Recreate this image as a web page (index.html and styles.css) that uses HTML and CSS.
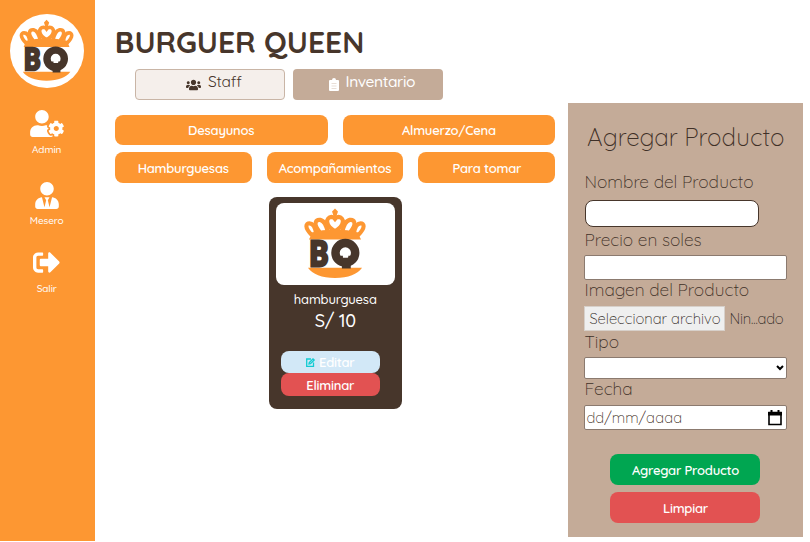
FILE: index.html
```html
<!DOCTYPE html>
<html lang="es">
<head>
<meta charset="utf-8">
<title>Burguer Queen</title>
<link rel="stylesheet" href="styles.css">
</head>
<body>
<svg class="defs" width="0" height="0" aria-hidden="true">
  <symbol id="logo" viewBox="0 0 64 74">
    <g fill="none" stroke="#fd9732" stroke-width="4.200">
      <path d="M8 28C0 20 2 16 5.500 16C9 16 11 19 12 25"/>
      <path d="M16 25C8 15 13 12 16.500 12.500C21 13.500 22.500 18 24 24"/>
      <path d="M55 28C63 20 61 16 57.500 16C54 16 52 19 51 25"/>
      <path d="M47 25C55 15 50 12 46.500 12.500C42 13.500 40.500 18 39 24"/>
      <path d="M31.500 24C21 18 22 10 28 9.500Q30 9.500 31.500 11.500Q33 9.500 35 9.500C41 10 42 18 31.500 24Z"/>
    </g>
    <path d="M31.500 1L34.500 4 32.500 10H30.500L28.500 4Z" fill="#fd9732"/>
    <path d="M6.500 25.500Q31.500 19 56.500 25.500Q56 30 58 32.500H5Q7 30 6.500 25.500Z" fill="#fd9732"/>
    <path d="M4 61H59Q52 71 31.500 71.500Q11 71 4 61Z" fill="#fd9732"/>
    <text x="5.500" y="59" class="logo-letter" textLength="19" lengthAdjust="spacingAndGlyphs">B</text>
    <circle cx="42" cy="46" r="10" fill="none" stroke="#47362b" stroke-width="8.600"/>
    <path d="M37 49H39.500V51H45V49H47.500V62H38.500V56H37Z" fill="#47362b"/>
  </symbol>
</svg>
<div class="app">
  <nav class="sidebar">
    <div class="brand"><svg width="58" height="64"><use href="#logo"/></svg></div>
    <a class="nav admin">
      <svg width="34" height="27" viewBox="0 0 640 512"><path fill="currentColor" d="M610.500 373.300c2.600-14.100 2.600-28.500 0-42.600l25.800-14.900c3-1.700 4.300-5.200 3.300-8.500-6.700-21.600-18.200-41.200-33.200-57.400-2.300-2.500-6-3.100-9-1.400l-25.800 14.900c-10.900-9.300-23.400-16.500-36.900-21.300v-29.800c0-3.400-2.400-6.400-5.700-7.100-22.300-5-45-4.800-66.200 0-3.300.7-5.700 3.700-5.700 7.100v29.800c-13.500 4.800-26 12-36.900 21.300l-25.800-14.900c-2.900-1.700-6.700-1.100-9 1.400-15 16.200-26.500 35.800-33.200 57.400-1 3.300.4 6.800 3.300 8.500l25.800 14.900c-2.600 14.100-2.600 28.500 0 42.600l-25.800 14.900c-3 1.700-4.300 5.200-3.300 8.500 6.700 21.600 18.200 41.100 33.200 57.400 2.300 2.500 6 3.100 9 1.400l25.800-14.900c10.900 9.300 23.400 16.500 36.900 21.300v29.800c0 3.400 2.400 6.400 5.700 7.100 22.300 5 45 4.800 66.200 0 3.300-.7 5.700-3.700 5.700-7.100v-29.800c13.500-4.800 26-12 36.900-21.300l25.800 14.900c2.900 1.700 6.700 1.100 9-1.400 15-16.200 26.500-35.800 33.200-57.400 1-3.300-.4-6.800-3.300-8.500l-25.800-14.900zM496 400.500c-26.800 0-48.500-21.800-48.500-48.500s21.800-48.500 48.500-48.500 48.500 21.800 48.500 48.500-21.700 48.500-48.500 48.500zM224 256c70.700 0 128-57.300 128-128S294.700 0 224 0 96 57.300 96 128s57.300 128 128 128zm201.200 226.500c-2.300-1.200-4.600-2.600-6.800-3.900l-7.900 4.600c-6 3.400-12.800 5.300-19.600 5.300-10.900 0-21.400-4.600-28.900-12.600-18.300-19.800-32.300-43.900-40.200-69.600-5.500-17.700 1.900-36.400 17.900-45.700l7.900-4.600c-.1-2.600-.1-5.200 0-7.800l-7.900-4.600c-16-9.200-23.400-28-17.900-45.700.9-2.900 2.200-5.800 3.200-8.700-3.800-.3-7.500-1.200-11.400-1.200h-16.700c-22.200 10.200-46.900 16-72.900 16s-50.600-5.800-72.900-16h-16.700C60.200 288 0 348.200 0 422.400V464c0 26.500 21.500 48 48 48h352c10.100 0 19.500-3.200 27.200-8.500-1.200-3.800-2-7.700-2-11.800v-9.200z"/></svg>
      <span>Admin</span></a>
    <a class="nav mesero">
      <svg width="24" height="27" viewBox="0 0 448 512"><path fill="currentColor" d="M224 256c70.700 0 128-57.300 128-128S294.700 0 224 0 96 57.300 96 128s57.300 128 128 128zm95.800 32.600L272 480l-32-136 32-56h-96l32 56-32 136-47.800-191.400C56.900 292 0 350.300 0 422.400V464c0 26.500 21.500 48 48 48h352c26.500 0 48-21.500 48-48v-41.600c0-72.100-56.900-130.400-128.200-133.800z"/></svg>
      <span>Mesero</span></a>
    <a class="nav salir">
      <svg width="27" height="27" viewBox="0 0 512 512"><path fill="currentColor" d="M497 273L329 441c-15 15-41 4.500-41-17v-96H152c-13.300 0-24-10.700-24-24v-96c0-13.300 10.700-24 24-24h136V88c0-21.400 25.900-32 41-17l168 168c9.300 9.400 9.300 24.600 0 34zM192 436v-40c0-6.600-5.400-12-12-12H96c-17.700 0-32-14.300-32-32V160c0-17.700 14.300-32 32-32h84c6.600 0 12-5.400 12-12V76c0-6.600-5.400-12-12-12H96c-53 0-96 43-96 96v192c0 53 43 96 96 96h84c6.600 0 12-5.400 12-12z"/></svg>
      <span>Salir</span></a>
  </nav>
  <main>
    <h1>BURGUER QUEEN</h1>
    <div class="tabs">
      <a class="tab staff"><svg width="15" height="12" viewBox="0 0 640 512"><path fill="currentColor" d="M96 224c35.300 0 64-28.700 64-64s-28.700-64-64-64-64 28.700-64 64 28.700 64 64 64zm448 0c35.300 0 64-28.700 64-64s-28.700-64-64-64-64 28.700-64 64 28.700 64 64 64zm32 32h-64c-17.600 0-33.500 7.100-45.100 18.600 40.300 22.100 68.900 62 75.100 109.400h66c17.700 0 32-14.300 32-32v-32c0-35.300-28.700-64-64-64zm-256 0c61.900 0 112-50.100 112-112S381.900 32 320 32 208 82.100 208 144s50.100 112 112 112zm76.800 32h-8.300c-20.800 10-43.900 16-68.500 16s-47.600-6-68.500-16h-8.300C179.600 288 128 339.600 128 403.200V432c0 26.500 21.500 48 48 48h288c26.500 0 48-21.500 48-48v-28.800c0-63.600-51.600-115.200-115.200-115.200zm-223.700-13.400C161.500 263.100 145.600 256 128 256H64c-35.300 0-64 28.700-64 64v32c0 17.700 14.300 32 32 32h65.900c6.300-47.400 34.900-87.300 75.200-109.400z"/></svg><span>Staff</span></a>
      <a class="tab inv"><svg width="10" height="13" viewBox="0 0 10 13"><path fill="#fff" d="M1 2H3A2 2 0 0 1 7 2H9Q10 2 10 3V12Q10 13 9 13H1Q0 13 0 12V3Q0 2 1 2Z"/><path stroke="#c4ab98" stroke-width=".4" d="M2.500 5.500H7.500M2.500 8H7.500M2.500 10.500H7.500"/></svg><span>Inventario</span></a>
    </div>
    <div class="cats two"><button>Desayunos</button><button>Almuerzo/Cena</button></div>
    <div class="cats three"><button>Hamburguesas</button><button>Acompañamientos</button><button>Para tomar</button></div>
    <article class="card">
      <div class="photo"><svg width="63" height="74"><use href="#logo"/></svg></div>
      <p class="name">hamburguesa</p>
      <p class="price">S/ 10</p>
      <button class="edit"><svg width="9" height="9" viewBox="0 0 9 9"><path d="M5 1H.7V8.300H7.500V4.500M3 6L3.300 4.500 7 .8 8.200 2 4.500 5.700Z" fill="none" stroke="#12cbd2" stroke-width="1.300"/></svg>Editar</button>
      <button class="remove">Eliminar</button>
    </article>
  </main>
  <form class="panel">
    <h2>Agregar Producto</h2>
    <label>Nombre del Producto</label>
    <div class="field rounded"></div>
    <label>Precio en soles</label>
    <div class="field price-field"></div>
    <label>Imagen del Producto</label>
    <div class="file"><span class="choose">Seleccionar archivo</span><span class="status">Nin...ado</span></div>
    <label>Tipo</label>
    <div class="field select"><svg width="8" height="6" viewBox="0 0 8 6"><path d="M1 1L4 4 7 1" fill="none" stroke="#000" stroke-width="2"/></svg></div>
    <label>Fecha</label>
    <div class="field date"><span>dd/mm/aaaa</span><svg width="14" height="16" viewBox="0 0 14 16"><path d="M1 2.500H13V14.500H1Z" fill="none" stroke="#000" stroke-width="1.600"/><path d="M0 2H14V5.500H0ZM2.500 0H4.500V3H2.500ZM9.500 0H11.500V3H9.500Z"/></svg></div>
    <button type="button" class="action add">Agregar Producto</button>
    <button type="button" class="action clear">Limpiar</button>
  </form>
</div>
</body>
</html>
```
FILE: styles.css
```css
* { box-sizing: border-box; margin: 0; padding: 0; }
body { background: #fff; font-family: Quicksand, Lato, sans-serif; color: #47362b; overflow: hidden; }
.defs { display: block; }
.app { display: flex; width: 803px; height: 541px; }
button { font: 600 13px/1 Quicksand, Lato, sans-serif; letter-spacing: -.25px; color: #fff; border: 0; border-radius: 8px; }
svg, symbol { display: block; overflow: visible; }
.logo-letter { font: 900 34px Lato, sans-serif; fill: #47362b; stroke: #47362b; stroke-width: 3px; }

.sidebar { width: 95.400px; background: #fd9732; display: flex; flex-direction: column; align-items: center; padding-top: 14px; flex: none; }
.brand { width: 74px; height: 74px; margin-bottom: 22px; border-radius: 50%; background: #fff; display: flex; align-items: center; justify-content: center; margin-right: 2px; }
.nav { color: #fff; font-size: 10px; line-height: 12px; font-weight: 500; letter-spacing: -.1px; display: flex; flex-direction: column; align-items: center; gap: 7px; margin-right: 2px; }
.admin { height: 72px; }
.mesero { height: 67px; gap: 6px; }
.salir { gap: 7px; }

main { width: 472.600px; padding: 23px 12.700px 0 19.400px; flex: none; }
h1 { font-size: 30px; line-height: 38px; font-weight: 700; }
.tabs { display: flex; gap: 8px; margin: 8px 0 15px 20px; }
.tab { width: 150px; height: 30.500px; border-radius: 4px; display: flex; justify-content: center; align-items: flex-start; gap: 7px; font-size: 15.500px; line-height: 20px; padding: 2px 0 0 8px; font-weight: 400; }
.tab svg { margin-top: 8px; }
.tab.staff { background: #f5efeb; border: 1px solid #c9b5a6; padding-top: 1px; }
.tab.staff span { letter-spacing: -.2px; }
.tab.inv { background: #c4ab98; color: #fff; font-weight: 500; letter-spacing: -.4px; }
.tab.inv svg { margin-top: 7px; }
.cats { display: grid; gap: 15px; margin-bottom: 7px; }
.cats button { background: #fd9732; height: 30.800px; padding-top: 2px; }
.two { grid-template-columns: 1fr 1fr; }
.three { grid-template-columns: 1fr 1fr 1fr; }
.card { width: 133px; height: 212px; margin: 14px 0 0 154px; border-radius: 8px; background: #47362b; color: #fff; padding: 6px 7px; display: flex; flex-direction: column; align-items: center; }
.photo { width: 119px; height: 82px; background: #fff; border-radius: 8px; display: flex; justify-content: center; padding-top: 4px; }
.name { font-size: 13px; line-height: 18px; margin-top: 5px; font-weight: 500; letter-spacing: -.2px; }
.price { font-size: 18px; line-height: 24px; margin-top: 1px; font-weight: 500; letter-spacing: -.3px; }
.card button { width: 99px; height: 22.500px; margin-right: 10px; display: flex; align-items: center; justify-content: center; gap: 4px; padding-top: 2px; }
.card .edit { background: #d2e8f7; margin-top: 17.500px; }
.remove { background: #e25252; }

.panel { width: 235px; height: 433.500px; margin-top: 103px; background: #c4ab98; padding: 17px 16px 0 16.500px; display: flex; flex-direction: column; color: #3f3027; flex: none; }
h2 { font-size: 24.200px; line-height: 34px; font-weight: 350; text-align: center; margin-bottom: 17px; white-space: nowrap; }
label { font-size: 17.300px; line-height: 22px; font-weight: 350; }
.field { background: #fff; border: 1px solid #8b7a6f; border-radius: 2px; }
.rounded { width: 174px; height: 27px; margin: 7px 0 2px 1px; border-color: #47362b; border-radius: 8px; }
.price-field { height: 25px; margin: 4px 0 -1px; }
.file { height: 25px; margin: 5px 0 0; display: flex; gap: 4px; font-size: 14.800px; line-height: 24px; font-weight: 350; white-space: nowrap; color: #2f2925; }
.choose { background: #efefef; border: 1px solid #d7d0ca; width: 141px; text-align: center; flex: none; }
.status { padding-top: 1px; letter-spacing: -.2px; }
.select { height: 22px; margin: 4px 0 -1px; display: flex; justify-content: flex-end; align-items: center; padding-right: 2px; }
.date { height: 25px; margin: 5px 0 23.500px; display: flex; justify-content: space-between; align-items: center; padding: 0 4px 0 1px; font-size: 14.800px; font-weight: 350; }
.action { width: 150px; height: 31px; margin-left: 26px; margin-bottom: 7px; padding-top: 2px; flex: none; }
.add { background: #00a651; }
.clear { background: #e25252; }
```
